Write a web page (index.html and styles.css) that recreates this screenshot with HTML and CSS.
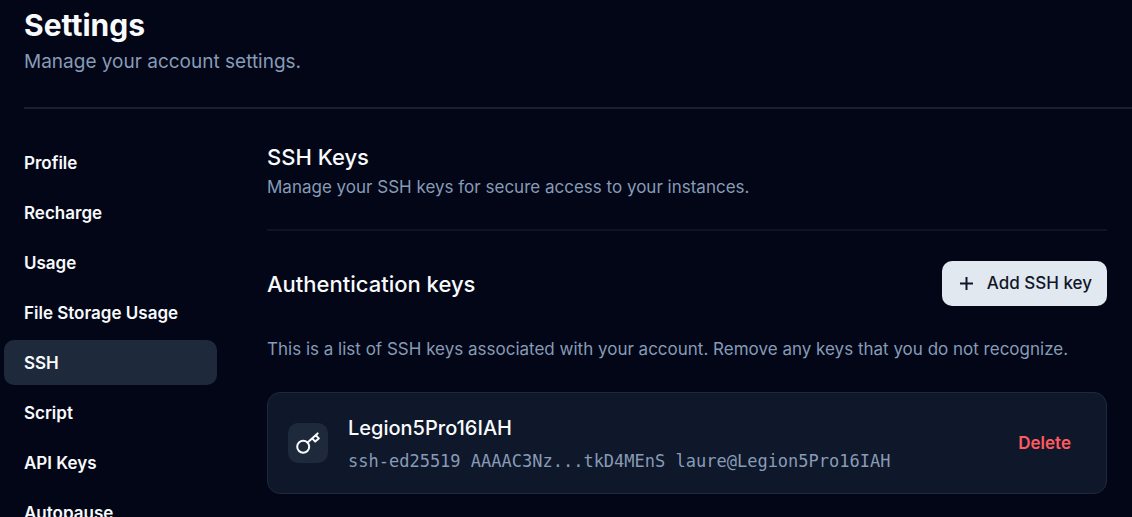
FILE: index.html
```html
<!DOCTYPE html>
<html lang="en">
<head>
<meta charset="utf-8">
<meta name="viewport" content="width=device-width, initial-scale=1">
<title>Settings</title>
<link rel="stylesheet" href="styles.css">
</head>
<body>
<header class="page-header">
  <h1 class="page-title">Settings</h1>
  <p class="page-subtitle">Manage your account settings.</p>
</header>
<div class="layout">
  <nav class="sidebar" aria-label="Settings">
    <a class="nav-link" href="#profile">Profile</a>
    <a class="nav-link" href="#recharge">Recharge</a>
    <a class="nav-link" href="#usage">Usage</a>
    <a class="nav-link" href="#storage">File Storage Usage</a>
    <a class="nav-link active" href="#ssh" aria-current="page">SSH</a>
    <a class="nav-link" href="#script">Script</a>
    <a class="nav-link" href="#api">API Keys</a>
    <a class="nav-link" href="#autopause">Autopause</a>
  </nav>
  <main class="content">
    <div class="intro">
      <h2 class="section-title">SSH Keys</h2>
      <p class="text">Manage your SSH keys for secure access to your instances.</p>
    </div>
    <div class="toolbar">
      <h2 class="section-title">Authentication keys</h2>
      <button class="add-button" type="button">
        <svg class="plus" viewBox="0 0 19 19" aria-hidden="true"><path d="M9.5 3v13M3 9.5h13"/></svg>
        Add SSH key
      </button>
    </div>
    <p class="text note">This is a list of SSH keys associated with your account. Remove any keys that you do not recognize.</p>
    <article class="key-card">
      <div class="key-icon">
        <svg class="key" viewBox="0 0 24 24" aria-hidden="true"><circle cx="7.2" cy="15.8" r="6"/><path d="M11.6 11.6 21.6 2.4M16.2 7.4l3 3.2 3.6-3.2-3-3.2"/></svg>
      </div>
      <div class="key-info">
        <h3 class="key-name">Legion5Pro16IAH</h3>
        <code class="key-value">ssh-ed25519 AAAAC3Nz...tkD4MEnS laure@Legion5Pro16IAH</code>
      </div>
      <button class="delete-button" type="button">Delete</button>
    </article>
  </main>
</div>
</body>
</html>
```
FILE: styles.css
```css
* { box-sizing: border-box; margin: 0; }

body {
  background: #020617;
  color: #f8fafc;
  font-family: Inter, "Liberation Sans", sans-serif;
  font-size: 17px;
  line-height: 24px;
}

::-webkit-scrollbar { display: none; }

button { font: inherit; border: 0; cursor: pointer; }

.page-header {
  margin-left: 24px;
  padding: 5px 0 29px;
  border-bottom: 2px solid #191f30;
}

.page-title { font-size: 30px; line-height: 40px; font-weight: 700; }

.page-subtitle { font-size: 19px; line-height: 33px; color: #879bb6; }

.layout {
  display: flex;
  gap: 50px;
  padding: 31px 25px 0 4px;
}

.sidebar {
  display: flex;
  flex-direction: column;
  flex: 0 0 213px;
  gap: 5px;
}

.nav-link {
  padding: 11px 20px 10px;
  border-radius: 10px;
  color: inherit;
  font-weight: 600;
  text-decoration: none;
}

.active { background: #1e293b; }

.content { flex: 1; min-width: 0; }

.intro {
  padding-bottom: 29px;
  border-bottom: 2px solid #0e1424;
}

.section-title { font-size: 22px; line-height: 34px; font-weight: 500; }

.text { color: #879bb6; line-height: 26px; }

.toolbar {
  display: flex;
  align-items: center;
  justify-content: space-between;
  margin-top: 30px;
}

.add-button {
  display: flex;
  align-items: center;
  gap: 11px;
  padding: 10px 15px;
  border-radius: 10px;
  background: #e2e8f0;
  color: #0f172a;
  font-weight: 500;
  line-height: 25px;
}

.plus {
  width: 19px;
  height: 19px;
  fill: none;
  stroke: currentColor;
  stroke-width: 2;
}

.note { margin: 30px 0; }

.key-card {
  display: flex;
  align-items: center;
  gap: 20px;
  padding: 17px 35px 17px 20px;
  border: 1px solid #1e293b;
  border-radius: 13px;
  background: #0f172a;
}

.key-icon {
  display: grid;
  place-items: center;
  width: 40px;
  height: 40px;
  border-radius: 10px;
  background: #1e293b;
}

.key {
  width: 24px;
  height: 24px;
  fill: none;
  stroke: currentColor;
  stroke-width: 2;
  stroke-linecap: round;
  stroke-linejoin: round;
}

.key-info { flex: 1; }

.key-name { font-size: 20px; line-height: 36px; font-weight: 500; }

.key-value {
  display: block;
  color: #879bb6;
  font-family: "DejaVu Sans Mono", monospace;
  font-size: 17px;
  line-height: 30px;
}

.delete-button {
  padding: 0;
  background: none;
  color: #ff5a5f;
  font-weight: 600;
}
```
